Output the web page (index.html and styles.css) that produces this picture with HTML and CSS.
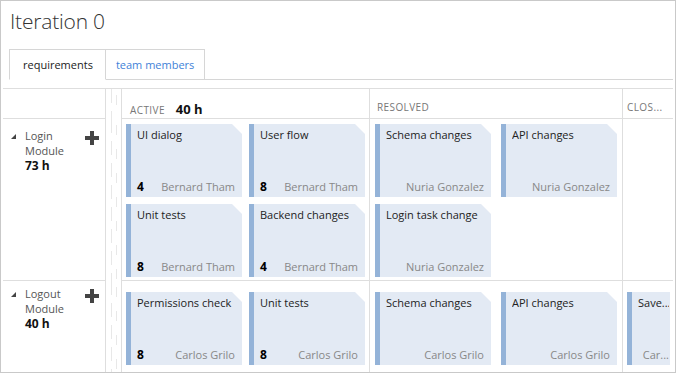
FILE: index.html
```html
<!DOCTYPE html>
<html lang="en">
<head>
    <meta charset="UTF-8">
    <title>Iteration 0</title>
    <link rel="stylesheet" href="styles.css">
</head>
<body>

<div class="frame">
    <h1 class="title">Iteration 0</h1>

    <div class="tabs">
        <div class="tab active">requirements</div>
        <div class="tab">team members</div>
        <div class="tab-rest"></div>
    </div>

    <div class="board">
        <!-- column headers -->
        <div class="cell"></div>
        <div class="cell gutter"></div>
        <div class="cell col-head active-col"><span class="state">Active</span><span class="hours">40 h</span></div>
        <div class="cell col-head resolved-col"><span class="state">Resolved</span></div>
        <div class="cell col-head closed-col"><span class="state">Clos...</span></div>

        <!-- Login Module -->
        <div class="cell lane-head first">
            <span class="toggle"></span>
            <div class="lane-name">Login<br>Module<br><b>73 h</b></div>
            <svg class="add" width="14" height="14" viewBox="0 0 14 14"><path d="M5 0h4v5h5v4H9v5H5V9H0V5h5z"/></svg>
        </div>
        <div class="cell gutter"></div>
        <div class="cell cards active-col first">
            <div class="card"><div class="card-title">UI dialog</div><div class="card-foot"><b>4</b><span class="owner">Bernard Tham</span></div></div>
            <div class="card"><div class="card-title">User flow</div><div class="card-foot"><b>8</b><span class="owner">Bernard Tham</span></div></div>
            <div class="card"><div class="card-title">Unit tests</div><div class="card-foot"><b>8</b><span class="owner">Bernard Tham</span></div></div>
            <div class="card"><div class="card-title">Backend changes</div><div class="card-foot"><b>4</b><span class="owner">Bernard Tham</span></div></div>
        </div>
        <div class="cell cards resolved-col first">
            <div class="card"><div class="card-title">Schema changes</div><div class="card-foot"><span class="owner">Nuria Gonzalez</span></div></div>
            <div class="card"><div class="card-title">API changes</div><div class="card-foot"><span class="owner">Nuria Gonzalez</span></div></div>
            <div class="card"><div class="card-title">Login task change</div><div class="card-foot"><span class="owner">Nuria Gonzalez</span></div></div>
        </div>
        <div class="cell cards closed-col first"></div>

        <!-- Logout Module -->
        <div class="cell lane-head second">
            <span class="toggle"></span>
            <div class="lane-name">Logout<br>Module<br><b>40 h</b></div>
            <svg class="add" width="14" height="14" viewBox="0 0 14 14"><path d="M5 0h4v5h5v4H9v5H5V9H0V5h5z"/></svg>
        </div>
        <div class="cell gutter"></div>
        <div class="cell cards active-col second">
            <div class="card"><div class="card-title">Permissions check</div><div class="card-foot"><b>8</b><span class="owner">Carlos Grilo</span></div></div>
            <div class="card"><div class="card-title">Unit tests</div><div class="card-foot"><b>8</b><span class="owner">Carlos Grilo</span></div></div>
        </div>
        <div class="cell cards resolved-col second">
            <div class="card"><div class="card-title">Schema changes</div><div class="card-foot"><span class="owner">Carlos Grilo</span></div></div>
            <div class="card"><div class="card-title">API changes</div><div class="card-foot"><span class="owner">Carlos Grilo</span></div></div>
        </div>
        <div class="cell cards closed-col second">
            <div class="card narrow"><div class="card-title">Save...</div><div class="card-foot"><span class="owner">Car...</span></div></div>
        </div>
    </div>
</div>

</body>
</html>
```

FILE: styles.css
```css
body {
    margin: 0;
    font-family: 'Open Sans', 'Noto Sans', sans-serif;
    color: #222;
    background: #fff;
}
.frame {
    width: 676px;
    height: 373px;
    box-sizing: border-box;
    border: 1px solid #c9c9c9;
    display: flex;
    flex-direction: column;
    overflow: hidden;
}
.title {
    margin: 6px 0 0 9px;
    font-size: 21px;
    font-weight: 300;
    line-height: 28px;
    letter-spacing: -0.2px;
    color: #333;
}
.tabs {
    display: flex;
    margin-top: 14px;
    padding-left: 8px;
    margin-right: 2px;
}
.tab {
    height: 29px;
    line-height: 29px;
    padding: 0 10px;
    font-size: 11px;
    color: #3f82d8;
    border-top: 1px solid #d6d6d6;
    border-right: 1px solid #d6d6d6;
    border-bottom: 1px solid #d6d6d6;
}
.tab.active {
    color: #222;
    padding: 0 12px 0 13px;
    border-left: 1px solid #d6d6d6;
    border-bottom-color: #fff;
}
.tab-rest {
    flex: 1;
    border-bottom: 1px solid #d6d6d6;
}
.board {
    flex: 1;
    margin: 8px 2px 0 2px;
    border-top: 1px solid #dedede;
    display: grid;
    grid-template-columns: 103px 16px 248px 253px 1fr;
    grid-template-rows: 30px 162px 1fr;
}
.cell {
    box-sizing: border-box;
    border-right: 1px solid #dedede;
    border-bottom: 1px solid #dedede;
    min-width: 0;
}
.closed-col {
    border-right: none;
}
.second {
    border-bottom: none;
}
.gutter {
    border-bottom: none;
    background:
        repeating-linear-gradient(to bottom, #e8e8e8 0 14px, transparent 14px 22px) 5px 0 / 1px 100% no-repeat,
        repeating-linear-gradient(to bottom, transparent 0 6px, #e8e8e8 6px 16px, transparent 16px 24px) 10px 0 / 1px 100% no-repeat;
}
.col-head {
    display: flex;
    align-items: baseline;
    padding: 11px 0 0 7px;
}
.col-head.active-col {
    padding-left: 8px;
}
.col-head.closed-col {
    padding-left: 4px;
}
.state {
    font-size: 10px;
    text-transform: uppercase;
    letter-spacing: 0.4px;
    color: #777;
}
.hours {
    margin-left: 11px;
    font-size: 13px;
    font-weight: 700;
    color: #111;
}
.lane-head {
    display: flex;
    align-items: flex-start;
    padding: 9px 0 0 8px;
}
.lane-head.second {
    padding-top: 5px;
}
.toggle {
    width: 0;
    height: 0;
    margin-top: 6px;
    border-left: 5px solid transparent;
    border-bottom: 5px solid #444;
}
.lane-name {
    margin-left: 9px;
    font-size: 11px;
    line-height: 15px;
    color: #555;
}
.lane-name b {
    font-size: 12px;
    color: #111;
}
.add {
    margin: 3px 6px 0 auto;
    fill: #444;
}
.cards {
    display: flex;
    flex-wrap: wrap;
    align-content: flex-start;
    gap: 7px;
    padding: 5px 0 0 4px;
}
.cards.resolved-col {
    gap: 7px 10px;
    padding-left: 5px;
}
.cards.second {
    padding-top: 11px;
}
.card {
    width: 116px;
    height: 73px;
    box-sizing: border-box;
    background: #e3eaf4;
    border-left: 5px solid #94b3d8;
    padding: 3px 7px 2px 6px;
    display: flex;
    flex-direction: column;
    justify-content: space-between;
    clip-path: polygon(0 0, calc(100% - 10px) 0, 100% 10px, 100% 100%, 0 100%);
}
.card.narrow {
    width: 43px;
    padding-right: 1px;
    clip-path: none;
}
.card-title {
    font-size: 11px;
    line-height: 15px;
    color: #222;
    white-space: nowrap;
    overflow: hidden;
}
.card-foot {
    display: flex;
    align-items: baseline;
    font-size: 11px;
    line-height: 16px;
}
.card-foot b {
    font-size: 12px;
    color: #000;
}
.owner {
    margin-left: auto;
    color: #888;
    white-space: nowrap;
}
```
